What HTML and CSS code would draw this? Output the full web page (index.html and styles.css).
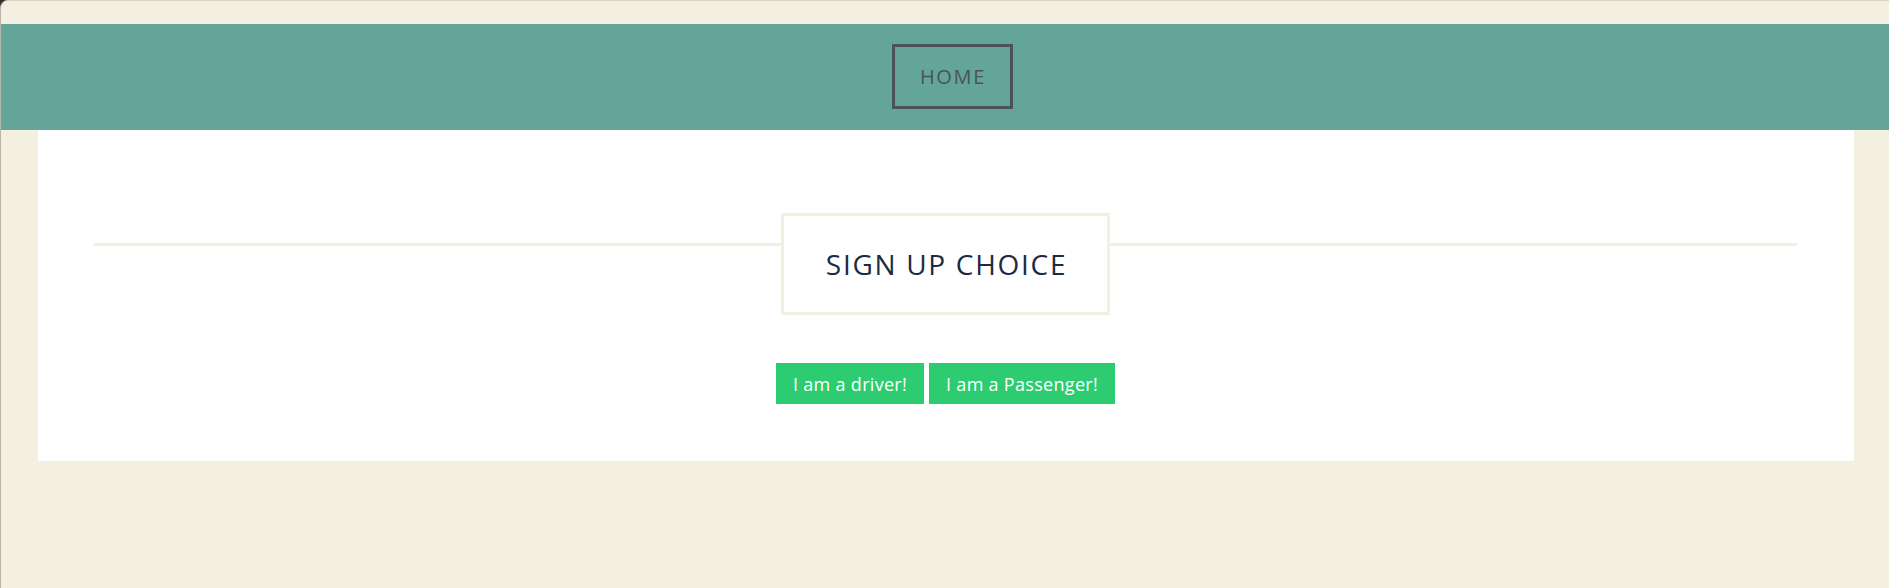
FILE: index.html
```html
<!DOCTYPE html>
<html lang="en">
<head>
<meta charset="utf-8">
<title>Sign up choice</title>
<link rel="stylesheet" href="styles.css">
</head>
<body>
<div class="frame">
  <header class="topbar">
    <nav class="nav">
      <a class="nav-link" href="#">HOME</a>
    </nav>
  </header>
  <main class="panel">
    <div class="title-row">
      <span class="rule"></span>
      <h1 class="title">SIGN UP CHOICE</h1>
      <span class="rule"></span>
    </div>
    <div class="choices">
      <button class="choice">I am a driver!</button>
      <button class="choice">I am a Passenger!</button>
    </div>
  </main>
</div>
</body>
</html>
```
FILE: styles.css
```css
html {
  background: #2e2e2e;
  height: 100%;
}
body {
  margin: 0;
  height: 100%;
  font-family: "Open Sans", "DejaVu Sans", sans-serif;
}
.frame {
  box-sizing: border-box;
  height: 100%;
  background: #f3efe1;
  border-top: 1px solid #d6d2c4;
  border-left: 1px solid #b8b4a8;
  border-top-left-radius: 8px;
  padding-top: 23px;
}
.topbar {
  background: #64a59a;
  height: 106px;
  box-sizing: border-box;
  padding-top: 20px;
}
.nav {
  display: flex;
  justify-content: center;
  padding-left: 14px;
}
.nav-link {
  box-sizing: border-box;
  width: 121px;
  height: 65px;
  border: 3px solid #4a5358;
  color: #4a5358;
  font-size: 20px;
  letter-spacing: 1.7px;
  text-decoration: none;
  display: flex;
  align-items: center;
  justify-content: center;
  padding-left: 2px;
}
.panel {
  background: #fff;
  margin: 0 35px 0 37px;
  height: 331px;
  box-sizing: border-box;
  padding: 83px 57px 0 56px;
}
.title-row {
  display: flex;
  align-items: flex-start;
}
.rule {
  flex: 1;
  height: 3px;
  margin-top: 30px;
  background: #f3efe1;
}
.title {
  box-sizing: border-box;
  margin: 0;
  width: 329px;
  height: 102px;
  border: 3px solid #f3efe1;
  display: flex;
  align-items: center;
  justify-content: center;
  padding-left: 2px;
  font-weight: 400;
  font-size: 28px;
  letter-spacing: 1.7px;
  color: #1c2b42;
}
.choices {
  display: flex;
  justify-content: center;
  gap: 5px;
  margin-top: 48px;
}
.choice {
  height: 41px;
  border: none;
  background: #2ecc71;
  color: #fff;
  font-family: "Open Sans", "DejaVu Sans", sans-serif;
  font-size: 18px;
  letter-spacing: 0.3px;
  padding: 0 17px;
  cursor: pointer;
}
```
